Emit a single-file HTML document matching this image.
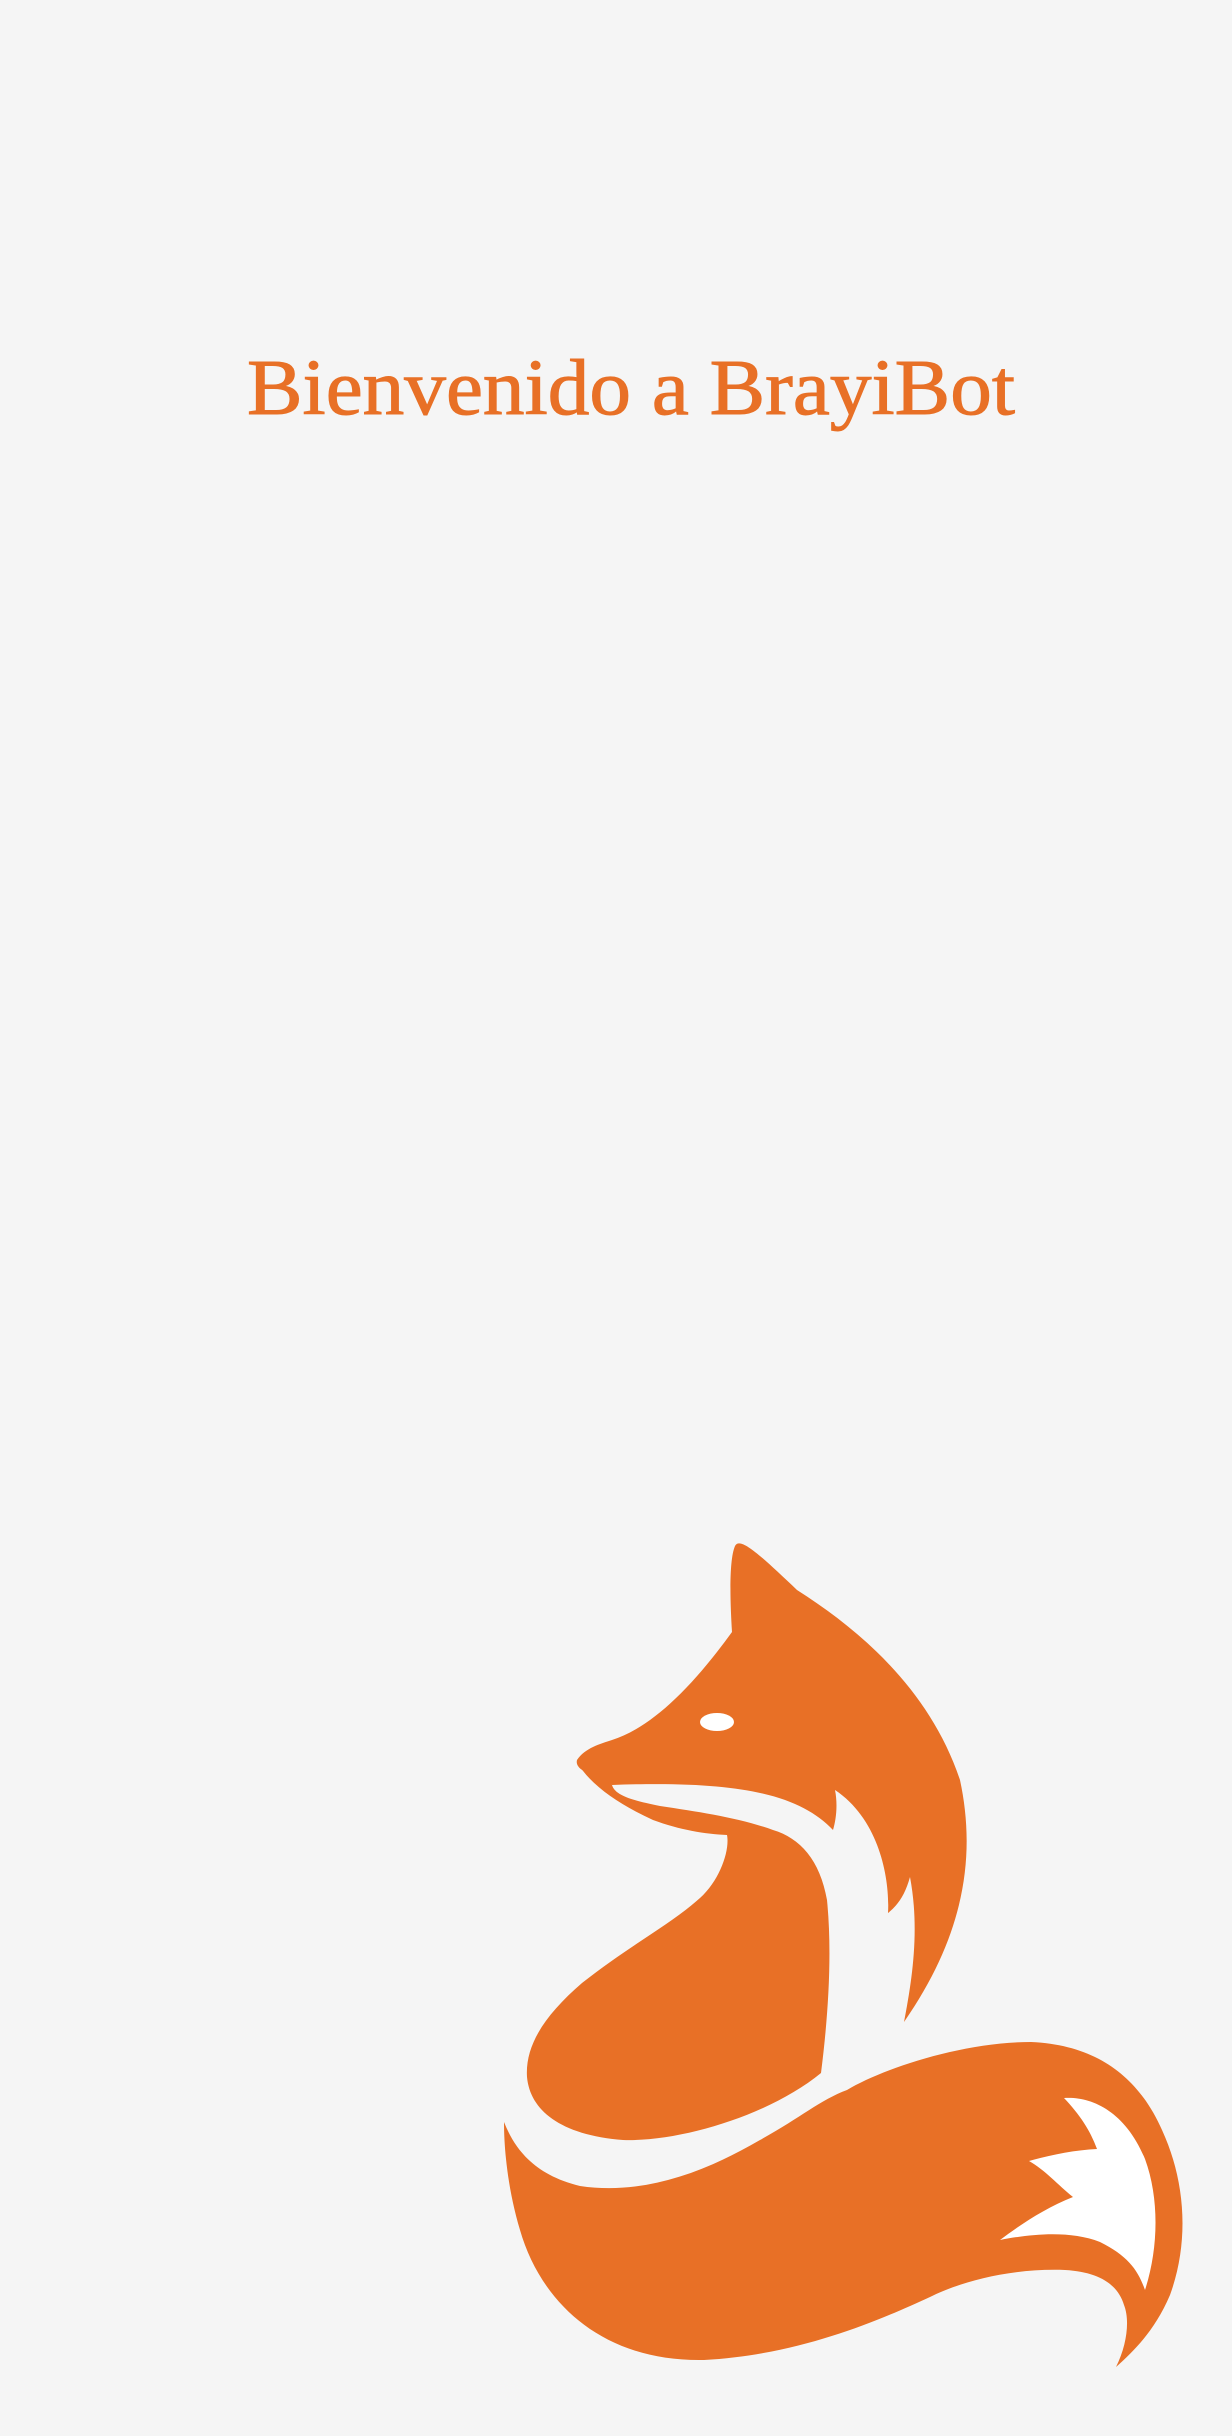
<!DOCTYPE html>
<html><head><meta charset="utf-8"><style>
html,body{margin:0;padding:0;background:#f5f5f5;}
body{width:1232px;height:2436px;overflow:hidden;}
svg{display:block;}
</style></head><body>
<svg width="1232" height="2436" viewBox="0 0 1232 2436" xmlns="http://www.w3.org/2000/svg">
<rect width="1232" height="2436" fill="#f5f5f5"/>
<text x="247" y="414" font-family="Liberation Serif, serif" font-size="79" fill="#e87026" stroke="#e87026" stroke-width="1" textLength="768" lengthAdjust="spacingAndGlyphs">Bienvenido a BrayiBot</text>
<g fill="#e87026">
<path d="M732,1632 C730,1600 729,1560 735,1546 C740,1536 760,1555 797,1590 C860,1630 930,1690 960,1780 C975,1850 968,1930 904,2022 C912,1980 920,1930 910,1877 C905,1895 898,1905 888,1913 C890,1880 880,1820 835,1790 C838,1805 836,1820 833,1830 C800,1795 740,1780 612,1785 L600,1780 C585,1772 575,1768 577,1760 C585,1748 600,1744 612,1740 C650,1728 690,1690 732,1632 Z"/>
<path d="M577,1762 C590,1785 620,1805 653,1820 C680,1830 705,1834 727,1835 C730,1850 720,1880 700,1898 C670,1925 630,1945 582,1983 C545,2015 525,2045 527,2077 C530,2110 560,2135 623,2140 C680,2142 770,2115 821,2073 C829,2010 832,1950 827,1900 C820,1860 800,1838 773,1830 C740,1818 700,1812 660,1806 C630,1800 615,1795 612,1785 Z"/>
<path d="M504,2122 C515,2150 535,2175 580,2186 C640,2195 700,2175 760,2140 C800,2118 820,2100 847,2090 C880,2070 960,2042 1031,2042 C1100,2045 1140,2080 1162,2130 C1185,2180 1190,2240 1170,2295 C1155,2330 1135,2350 1116,2367 C1127,2345 1130,2320 1124,2305 C1118,2285 1100,2272 1065,2270 C1010,2268 960,2282 930,2297 C880,2320 800,2355 704,2360 C600,2362 540,2300 520,2230 C508,2190 504,2150 504,2122 Z"/>
</g>
<ellipse cx="717" cy="1722" rx="17" ry="9" fill="#ffffff"/>
<path fill="#ffffff" d="M1064,2098 C1090,2096 1125,2110 1145,2159 C1160,2200 1158,2250 1145,2290 C1138,2270 1128,2256 1100,2242 C1070,2230 1030,2234 1000,2240 C1020,2225 1045,2208 1073,2197 C1058,2185 1045,2170 1029,2161 C1050,2155 1075,2150 1097,2149 C1090,2130 1080,2115 1064,2098 Z"/>
</svg>
</body></html>
